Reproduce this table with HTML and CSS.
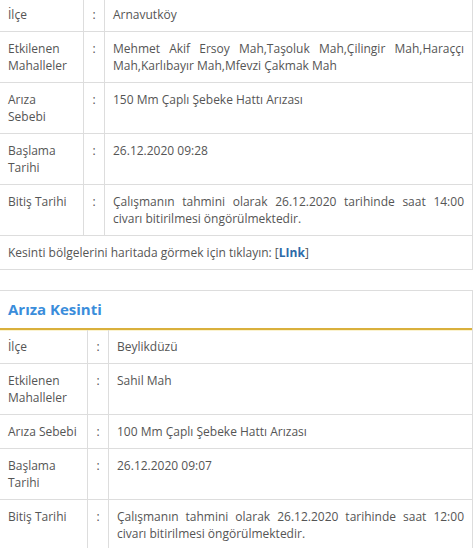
FILE: index.html
```html
<!DOCTYPE html>
<html lang="tr">
<head>
<meta charset="utf-8">
<link rel="stylesheet" href="styles.css">
</head>
<body>
<div class="page">
  <div class="box box-first">
    <div class="row">
      <div class="lab">İlçe</div><div class="sep">:</div><div class="val">Arnavutköy</div>
    </div>
    <div class="row">
      <div class="lab">Etkilenen Mahalleler</div><div class="sep">:</div><div class="val">Mehmet Akif Ersoy Mah,Taşoluk Mah,Çilingir Mah,Haraççı Mah,Karlıbayır Mah,Mfevzi Çakmak Mah</div>
    </div>
    <div class="row">
      <div class="lab">Arıza Sebebi</div><div class="sep">:</div><div class="val">150 Mm Çaplı Şebeke Hattı Arızası</div>
    </div>
    <div class="row">
      <div class="lab">Başlama Tarihi</div><div class="sep">:</div><div class="val">26.12.2020 09:28</div>
    </div>
    <div class="row">
      <div class="lab">Bitiş Tarihi</div><div class="sep">:</div><div class="val">Çalışmanın tahmini olarak 26.12.2020 tarihinde saat 14:00 civarı bitirilmesi öngörülmektedir.</div>
    </div>
    <div class="linkrow">Kesinti bölgelerini haritada görmek için tıklayın: [<a class="lnk" href="#">LInk</a>]</div>
  </div>

  <div class="box box-second">
    <div class="head"><h2 class="title">Arıza Kesinti</h2></div>
    <div class="row wide">
      <div class="lab">İlçe</div><div class="sep">:</div><div class="val">Beylikdüzü</div>
    </div>
    <div class="row wide">
      <div class="lab">Etkilenen Mahalleler</div><div class="sep">:</div><div class="val">Sahil Mah</div>
    </div>
    <div class="row wide">
      <div class="lab">Arıza Sebebi</div><div class="sep">:</div><div class="val">100 Mm Çaplı Şebeke Hattı Arızası</div>
    </div>
    <div class="row wide">
      <div class="lab">Başlama Tarihi</div><div class="sep">:</div><div class="val">26.12.2020 09:07</div>
    </div>
    <div class="row wide">
      <div class="lab">Bitiş Tarihi</div><div class="sep">:</div><div class="val">Çalışmanın tahmini olarak 26.12.2020 tarihinde saat 12:00 civarı bitirilmesi öngörülmektedir.</div>
    </div>
  </div>
</div>
</body>
</html>
```

FILE: styles.css
```css
html, body {
  margin: 0;
  padding: 0;
  background: #ffffff;
}
body {
  font-family: "Open Sans", "DejaVu Sans", sans-serif;
  font-size: 12px;
  line-height: 17px;
  color: #555555;
}
.page {
  width: 473px;
  margin-top: -2px;
}
.box {
  border-right: 1px solid #dddddd;
  background: #ffffff;
}
.box-second {
  border-top: 1px solid #dddddd;
  margin-top: 20px;
}
.row {
  display: grid;
  grid-template-columns: 83px 21px 1fr;
  border-bottom: 1px solid #dddddd;
}
.row.wide {
  grid-template-columns: 87px 21px 1fr;
}
.lab {
  padding: 8px;
}
.sep {
  border-left: 1px solid #dddddd;
  padding: 8px 0;
  text-align: center;
}
.val {
  border-left: 1px solid #dddddd;
  padding: 8px;
  text-align: justify;
}
.linkrow {
  padding: 8px;
  border-bottom: 1px solid #dddddd;
}
.lnk {
  color: #2c6aa8;
  font-weight: bold;
  text-decoration: none;
}
.head {
  border-bottom: 2px solid #d9b03c;
  box-shadow: 0 1px 0 #fbf3cf;
  padding: 10px 8px;
}
.title {
  margin: 0;
  font-size: 15px;
  line-height: 17px;
  font-weight: bold;
  color: #3a8ddb;
}
```
